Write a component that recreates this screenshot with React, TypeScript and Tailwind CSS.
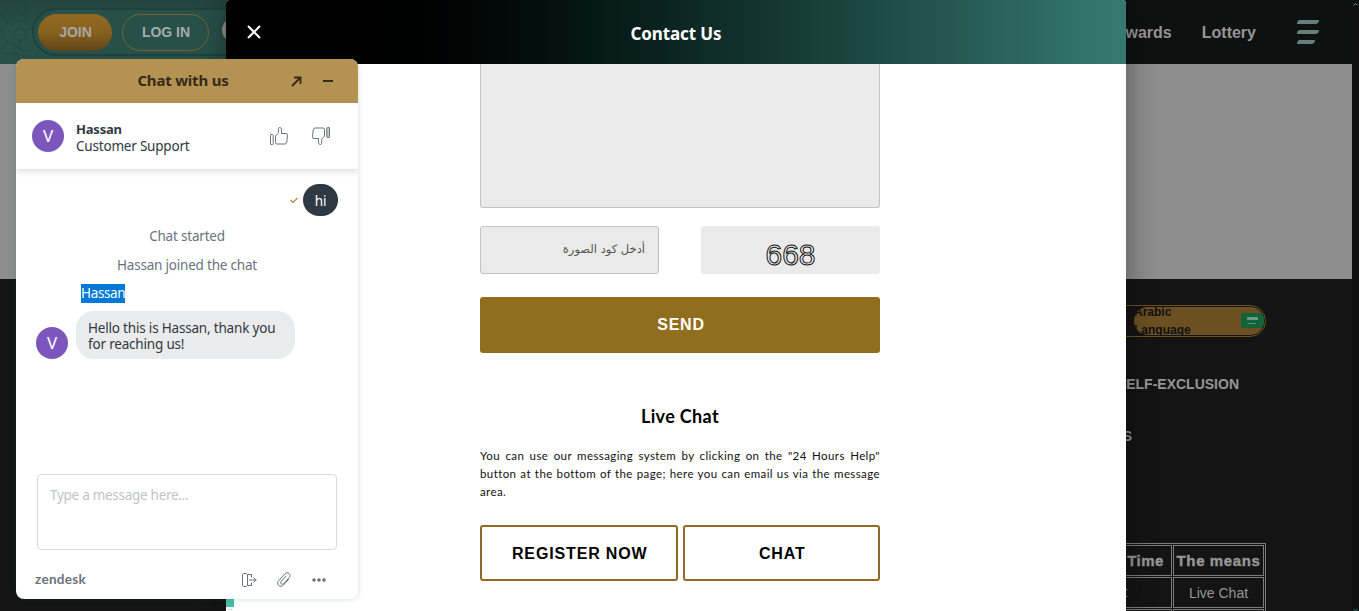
import type { ReactNode } from 'react';

const FONT_UI = "font-['Noto_Sans','Liberation_Sans',sans-serif]";

function SiteHeader() {
  return (
    <header className="flex h-16 w-[1352px] items-center justify-between bg-[#0f1010]">
      <div className="relative flex h-16 w-[300px] items-center overflow-hidden bg-linear-to-b from-[#214440] via-[#29514b] to-[#28504a] pl-[38px]">
        <svg className="absolute top-0 left-0" width="60" height="64" fill="none" stroke="#21463f" strokeWidth="1">
          <path d="M8 9l6 3v7l-6 3-6-3v-7zM20 28l6 3v7l-6 3-6-3v-7zM8 42l6 3v7l-6 3-6-3v-7zM-4 28l6 3v7l-6 3-6-3v-7zM20 2l6 3v8l-6 3M14 19l6 3 6-3M14 45l6 4M2 31l6-9M2 38l6 4M26 31l6-4M20 55l-6-3v9M26 12l6-3M20 41v8l6 3" />
        </svg>
        <div className="absolute top-2 left-8 h-12 w-72 rounded-l-full border-2 border-[#1f423d] bg-[#28504a]" />
        <button className="relative h-[37px] w-[74px] rounded-full bg-linear-to-b from-[#956a20] via-[#86601e] to-[#624416] pl-px text-sm font-bold text-[#a7a7a5]">
          JOIN
        </button>
        <button className="relative ml-[10px] h-[37px] w-[87px] rounded-full border border-[#7b6328] pl-px text-sm font-bold text-[#a3aaa8]">
          LOG IN
        </button>
        <div className="relative ml-[13px] size-6 shrink-0 -translate-y-[2px] rounded-full bg-[#8e9090]" />
      </div>
      <nav className="flex items-center pr-[33px] text-[16px] font-bold text-[#959595]">
        <span className="pt-[2px]">Rewards</span>
        <span className="ml-[30px] pt-[2px]">Lottery</span>
        <svg className="ml-[41px]" width="22" height="24" fill="#648079">
          <path d="M3 0h19q0 4-4 4H0q0-4 3-4zM3 10h19q0 4-4 4H0q0-4 3-4zM3 20h15q0 4-4 4H0q0-4 3-4z" />
        </svg>
      </nav>
    </header>
  );
}

function SiteFooter() {
  return (
    <footer className="flex h-[332px] w-[1352px] flex-col items-end bg-[#141414] pr-[86px] text-[#969696]">
      <div className="mt-[26px] flex h-8 w-[240px] justify-end rounded-full border border-[#6b5020] p-px">
        <div className="relative flex h-7 w-[130px] items-center overflow-hidden rounded-full bg-[#6c5022]">
          <span className="w-20 text-[12px] leading-[18px] font-bold text-[#111]">Arabic Language</span>
          <svg className="absolute top-[6px] right-0" width="23" height="15">
            <rect width="23" height="15" fill="#12633a" />
            <path d="M6 4h11v3H6z" fill="#6c9780" />
            <path d="M7 10.500h8" stroke="#5b8e70" />
          </svg>
        </div>
      </div>
      <p className="mt-[37px] pr-[27px] text-[14px] leading-5 font-bold">SELF-EXCLUSION</p>
      <p className="mt-8 pr-[134px] text-[14px] leading-5 font-bold">TERMS</p>
      <table className="mt-[97px] w-[260px] table-fixed border-separate border-spacing-px border border-[#7b7b7b] text-center">
        <tbody>
          <tr className="h-[31px]">
            <th className="border border-[#7b7b7b] pt-[2px] pl-[111px] text-[15px] font-black tracking-[0.5px] [-webkit-text-stroke:0.4px_#969696]">
              Time
            </th>
            <th className="w-[91px] border border-[#7b7b7b] p-0 pt-[2px] text-[15px] font-black tracking-[0.6px] whitespace-nowrap [-webkit-text-stroke:0.4px_#969696]">
              The means
            </th>
          </tr>
          <tr className="h-[31px]">
            <td className="border border-[#7b7b7b] pl-[45px] text-[14px]">Chat</td>
            <td className="border border-[#7b7b7b] pt-[2px] text-[14px]">Live Chat</td>
          </tr>
          <tr className="h-[31px]">
            <td className="border border-[#7b7b7b]" />
            <td className="border border-[#7b7b7b]" />
          </tr>
        </tbody>
      </table>
    </footer>
  );
}

function OutlineButton({ children }: { children: ReactNode }) {
  return (
    <button className="h-14 flex-1 rounded-[3px] border-2 border-[#8f6b25] pt-px pl-[2px] text-[16px] font-bold tracking-[0.85px] text-black">
      {children}
    </button>
  );
}

function ContactModal() {
  return (
    <section className="absolute top-0 left-[226px] h-[611px] w-[900px] overflow-hidden rounded-t bg-white shadow-[0_0_30px_rgba(0,0,0,0.4)]">
      <div className="relative flex h-16 items-center justify-center bg-linear-to-r from-black from-8% to-[#34786f] to-98%">
        <svg className="absolute top-[25px] left-[21px]" width="14" height="14" stroke="#fff" strokeWidth="2">
          <path d="M1 1l12 12M13 1L1 13" />
        </svg>
        <h1 className="pt-1 font-['Noto_Sans',sans-serif] text-[17px] font-bold tracking-[-0.1px] text-white">Contact Us</h1>
      </div>
      <div className="ml-[254px] w-[400px]">
        <div className="h-36 rounded-b-[3px] border border-t-0 border-[#c2c2c2] bg-[#eaeaea]" />
        <div className="mt-[18px] flex justify-between">
          <div
            dir="rtl"
            className="flex h-12 w-[179px] items-center rounded-[3px] border border-[#c2c2c2] bg-[#eaeaea] px-[13px] font-['DejaVu_Sans','Liberation_Sans',sans-serif] text-[11.500px] text-[#555]"
          >
            أدخل كود الصورة
          </div>
          <div className="flex h-12 w-[179px] items-center justify-center rounded-[3px] bg-[#eaeaea] pt-[10px]">
            <span className="text-[30px] leading-none text-[#eaeaea] [-webkit-text-stroke:1px_#111]">668</span>
          </div>
        </div>
        <button className="mt-[23px] h-14 w-full rounded-[3px] bg-[#916d1e] text-[16px] font-bold tracking-[0.8px] text-white">
          <span className="pl-[2px]">SEND</span>
        </button>
        <h2 className="mt-[51px] text-center font-['Lato',sans-serif] text-[18px] leading-6 font-bold tracking-[0.35px] text-black">
          Live Chat
        </h2>
        <p className="mt-[19px] text-justify font-['Lato',sans-serif] text-[11.500px] leading-[18px] tracking-[0.4px] text-[#111]">
          You can use our messaging system by clicking on the "24 Hours Help" button at the bottom of the page; here you can
          email us via the message area.
        </p>
        <div className="mt-6 flex gap-[5px]">
          <OutlineButton>REGISTER NOW</OutlineButton>
          <OutlineButton>CHAT</OutlineButton>
        </div>
      </div>
      <div className="absolute bottom-[4px] left-0 size-2 bg-[#44bda5]" />
      <svg className="absolute bottom-0 left-[2px]" width="5" height="2" stroke="#8fd8ca">
        <path d="M0 .5h1.500M3 .5h1.500" />
      </svg>
    </section>
  );
}

function Avatar() {
  return (
    <div className="flex size-8 shrink-0 items-center justify-center rounded-full bg-[#7c56bd] text-[17px] text-white">V</div>
  );
}

function ThumbUp({ flipped = false }: { flipped?: boolean }) {
  return (
    <svg
      className={flipped ? 'rotate-180' : ''}
      width="18"
      height="18"
      viewBox="0 0 18 18"
      fill="none"
      stroke="#68737d"
      strokeLinejoin="round"
    >
      <path fill={flipped ? '#c5cace' : 'none'} d="M1 7.500h1.500q.7 0 .7.700v8.600q0 .7-.7.700H1q-.5 0-.5-.7V8.200q0-.7.500-.7z" />
      <path d="M5.500 8.500c2-.8 3-2.500 3-5V1.500q0-1 1-1c1.500 0 2 1 2 2.500V6.500h4.300q1.900 0 1.700 1.800l-.8 7q-.3 1.700-1.900 1.700H7q-1.500 0-1.500-1.500z" />
    </svg>
  );
}

function ChatWidget() {
  return (
    <aside
      className={`absolute top-[59px] left-4 flex h-[540px] w-[342px] flex-col overflow-hidden rounded-lg bg-white text-[13.500px] tracking-[-0.2px] text-[#2f3941] shadow-[0_0_4px_1px_rgba(23,73,77,0.15)] ${FONT_UI}`}
    >
      <div className="relative flex h-11 items-center justify-center bg-[#b39252] pr-2 pb-[2px] text-[15px] font-bold text-[#352b18]">
        Chat with us
        <svg className="absolute top-[17px] right-[56px]" width="11" height="11" fill="none" stroke="#352b18" strokeWidth="1.800">
          <path d="M1 10L9 2M3 1.500h6.500V8" />
        </svg>
        <div className="absolute top-[21px] right-[25px] h-[2px] w-[10px] bg-[#352b18]" />
      </div>
      <div className="z-10 flex h-[66px] items-center pl-4 shadow-[0_3px_6px_rgba(0,0,0,0.12)]">
        <Avatar />
        <div className="ml-3 flex-1 pt-[3px] leading-[17px]">
          <p className="text-[13px] font-bold">Hassan</p>
          <p>Customer Support</p>
        </div>
        <div className="flex gap-6 pr-7">
          <ThumbUp />
          <ThumbUp flipped />
        </div>
      </div>

      <div className="flex flex-1 flex-col">
        <div className="mt-[15px] flex items-center justify-end gap-[5px] pr-5">
          <svg className="mt-px" width="8" height="7" fill="none" stroke="#b39252" strokeWidth="1.500">
            <path d="M.5 3L3 5.500 7.500 1" />
          </svg>
          <div className="flex h-8 w-[35px] items-center justify-center rounded-full bg-[#2f3941] pt-[3px] text-white">hi</div>
        </div>
        <p className="mt-[10px] text-center leading-5 text-[#68737d]">Chat started</p>
        <p className="mt-[9px] text-center leading-5 text-[#68737d]">Hassan joined the chat</p>
        <p className="mt-[9px] ml-[65px] self-start bg-[#0078d7] leading-[19px] tracking-[-0.35px] text-white">Hassan</p>
        <div className="mt-2 flex items-end gap-2 pl-5">
          <Avatar />
          <div className="h-12 w-[219px] rounded-[18px] bg-[#e9ebed] px-3 pt-[9px] leading-4 tracking-[-0.19px]">
            Hello this is Hassan, thank you
            <br />
            for reaching us!
          </div>
        </div>
      </div>

      <div className="mx-[21px] h-[76px] rounded border border-[#d8dcde] px-3 pt-[11px] leading-[18px] tracking-[-0.28px] text-[#bfc4c8]">
        Type a message here...
      </div>
      <div className="flex h-[49px] items-center justify-between pt-[10px] pr-8 pl-[19px]">
        <span className="font-['Lato',sans-serif] text-[13.500px] font-bold tracking-[0.3px] text-[#68737d]">zendesk</span>
        <div className="flex items-center gap-5 text-[#68737d]">
          <svg width="15" height="14" fill="none" stroke="currentColor">
            <path d="M5.500 1.500v11l-1 1h-3q-1 0-1-1v-11q0-1 1-1h3zM5.500 1.500h4v3M5.500 12.500h4v-3M7 7h7.500M11.500 4.500L14 7l-2.500 2.500" />
          </svg>
          <svg width="14" height="15" fill="none" stroke="currentColor" strokeLinecap="round">
            <path d="M11.500 7.500l-5 5.500c-1.500 1.600-3.500 1.700-4.800.4C.4 12.100.4 10 1.800 8.500l6-6.500c1.200-1.400 3-1.700 4.300-.5 1.200 1.100 1.200 2.800 0 4.200L6.800 11.500c-.8.900-1.900 1-2.600.4-.8-.7-.7-1.800.1-2.600L9 4.200" />
          </svg>
          <svg className="ml-px" width="14" height="4" fill="currentColor">
            <circle cx="2" cy="2" r="1.800" />
            <circle cx="7" cy="2" r="1.800" />
            <circle cx="12" cy="2" r="1.800" />
          </svg>
        </div>
      </div>
    </aside>
  );
}

export default function App() {
  return (
    <main className="relative h-[611px] w-[1359px] overflow-hidden bg-[#101010] font-['Liberation_Sans',Arial,sans-serif]">
      <SiteHeader />
      <div className="h-[215px] w-[1352px] bg-[#8d8d8d]" />
      <SiteFooter />
      <svg className="absolute top-[2px] right-[1px]" width="5" height="4" fill="none" stroke="#35a58f">
        <path d="M.5 3.500l2-2 2 2" />
      </svg>
      <svg className="absolute right-[1px] bottom-0" width="5" height="2" fill="none" stroke="#248170">
        <path d="M.5 0l2 2 2-2" />
      </svg>
      <ContactModal />
      <ChatWidget />
    </main>
  );
}
